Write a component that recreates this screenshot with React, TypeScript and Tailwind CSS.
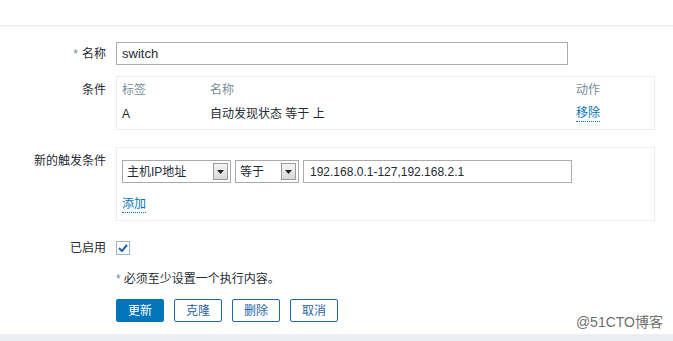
import React from "react";

const font = { fontFamily: '"Liberation Sans", "Noto Sans CJK SC", sans-serif' };

function Select({ value, width }: { value: string; width: string }) {
  return (
    <div className={`flex h-[23px] ${width} items-stretch border border-[#a9a9a9] bg-white`}>
      <div className="flex flex-1 items-center pl-[4px] text-[12px] text-[#1f2c33]">{value}</div>
      <div className="m-[2px] flex w-[15px] items-center justify-center border border-[#9a9a9a] bg-gradient-to-b from-[#f4f4f4] to-[#d8d8d8]">
        <svg width="7" height="4" viewBox="0 0 7 4">
          <path d="M0 0h7L3.5 4z" fill="#222" />
        </svg>
      </div>
    </div>
  );
}

function Label({ children, className = "" }: { children: React.ReactNode; className?: string }) {
  return (
    <div className={`w-[106px] shrink-0 text-right text-[12px] leading-[16px] text-[#1f2c33] ${className}`}>
      {children}
    </div>
  );
}

export default function App() {
  return (
    <div className="relative h-[341px] w-[673px] overflow-hidden bg-white" style={font}>
      <div className="h-[25px]" />
      <div className="h-[2px] bg-[#f1f1f1]" />
      <div className="flex flex-col">
        {/* name */}
        <div className="mt-[15px] flex items-center gap-[10px]">
          <Label>
            <span className="mr-[4px] text-[#768d99]">*</span>名称
          </Label>
          <div className="flex h-[23px] w-[452px] items-center border border-[#acacac] pl-[5px] text-[13px] text-[#1f2c33]">
            switch
          </div>
        </div>
        {/* conditions */}
        <div className="mt-[11px] flex gap-[10px]">
          <Label className="pt-[6px]">条件</Label>
          <div className="h-[54px] w-[539px] border border-[#ececec] text-[12px] leading-[16px]">
            <div className="mt-[5px] flex text-[#768d99]">
              <div className="w-[93px] pl-[5px]">标签</div>
              <div className="w-[366px]">名称</div>
              <div>动作</div>
            </div>
            <div className="mt-[8px] flex text-[#1f2c33]">
              <div className="w-[93px] pl-[5px]">A</div>
              <div className="w-[366px]">自动发现状态 等于 上</div>
              <div className="border-b border-dotted border-[#0275b8] leading-[15px] text-[#0275b8]">移除</div>
            </div>
          </div>
        </div>
        {/* new condition */}
        <div className="mt-[17px] flex gap-[10px]">
          <Label className="pt-[6px]">新的触发条件</Label>
          <div className="h-[74px] w-[539px] border border-[#ececec] pl-[5px] pt-[12px]">
            <div className="flex items-center gap-[4px]">
              <Select value="主机IP地址" width="w-[109px]" />
              <Select value="等于" width="w-[64px]" />
              <div className="flex h-[23px] w-[269px] items-center border border-[#acacac] pl-[6px] text-[12px] text-[#1f2c33]">
                192.168.0.1-127,192.168.2.1
              </div>
            </div>
            <div className="mt-[14px] inline-block border-b border-dotted border-[#0275b8] text-[12px] leading-[15px] text-[#0275b8]">
              添加
            </div>
          </div>
        </div>
        {/* enabled */}
        <div className="mt-[19px] flex items-center gap-[10px]">
          <Label>已启用</Label>
          <div className="flex h-[14px] w-[14px] items-center justify-center border border-[#9fb2c1] bg-white">
            <svg width="10" height="8" viewBox="0 0 10 8">
              <path d="M1 4l3 3 5-6" fill="none" stroke="#1f65a5" strokeWidth="2" />
            </svg>
          </div>
        </div>
        {/* note */}
        <div className="ml-[116px] mt-[15px] text-[12px] leading-[16px] text-[#1f2c33]">
          <span className="mr-[3px] text-[#768d99]">*</span>必须至少设置一个执行内容。
        </div>
        {/* buttons */}
        <div className="ml-[116px] mt-[12px] flex gap-[10px] text-[12px]">
          <div className="flex h-[23px] w-[48px] items-center justify-center rounded-[2px] border border-[#0275b8] bg-[#0275b8] text-white">
            更新
          </div>
          <div className="flex h-[23px] w-[48px] items-center justify-center rounded-[2px] border border-[#1f65a5] bg-white text-[#1f65a5]">
            克隆
          </div>
          <div className="flex h-[23px] w-[48px] items-center justify-center rounded-[2px] border border-[#1f65a5] bg-white text-[#1f65a5]">
            删除
          </div>
          <div className="flex h-[23px] w-[48px] items-center justify-center rounded-[2px] border border-[#1f65a5] bg-white text-[#1f65a5]">
            取消
          </div>
        </div>
      </div>
      <div className="absolute bottom-0 left-0 h-[7px] w-full bg-[#ebeef2]" />
      <div className="absolute bottom-[11px] right-[10px] text-[14px] leading-[16px] text-[#6f6f6f]">
        @51CTO博客
      </div>
    </div>
  );
}
